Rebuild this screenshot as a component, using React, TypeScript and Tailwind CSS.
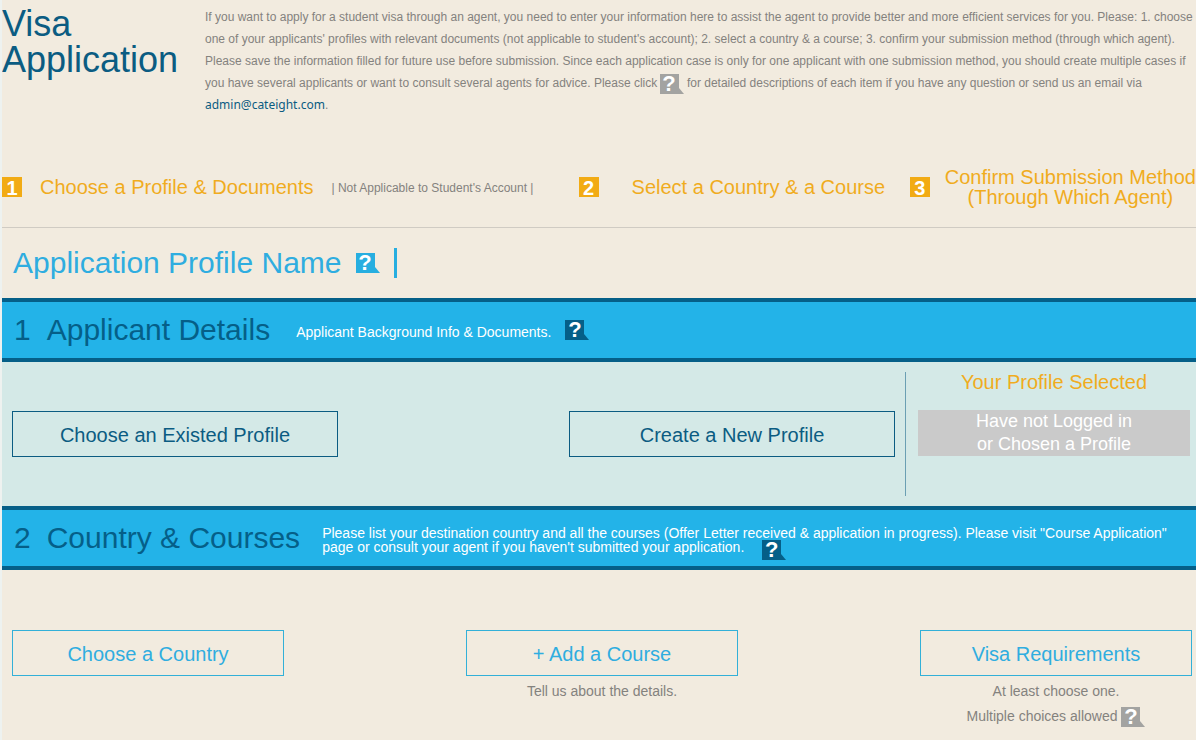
import type { ReactNode } from "react";

type HelpProps = { label: string; tone: "gray" | "sky" | "navy"; className?: string };

const tones = {
  gray: { box: "bg-[#a3a3a1]", tail: "text-[#a3a3a1]" },
  sky: { box: "bg-[#27aee0]", tail: "text-[#27aee0]" },
  navy: { box: "bg-[#055f88]", tail: "text-[#055f88]" },
};

function Help({ label, tone, className = "" }: HelpProps) {
  return (
    <button type="button" aria-label={label} className={`inline-flex h-5 shrink-0 items-end ${className}`}>
      <span
        className={`flex h-5 w-[19px] items-center justify-center text-[22px] leading-5 font-bold text-white ${tones[tone].box}`}
      >
        ?
      </span>
      <svg viewBox="0 0 5 6" className={`h-1.5 w-[5px] ${tones[tone].tail}`} aria-hidden="true">
        <path d="M0 0L5 6H0Z" fill="currentColor" />
      </svg>
    </button>
  );
}

function Badge({ children }: { children: ReactNode }) {
  return (
    <span className="flex h-5 w-5 shrink-0 items-center justify-center bg-[#f2ab14] pt-px text-xl leading-5 font-bold text-white">
      {children}
    </span>
  );
}

function Band({ number, title, children }: { number: number; title: string; children: ReactNode }) {
  return (
    <div className="flex h-16 items-center border-y-4 border-[#055f88] bg-[#23b3e8] pl-3">
      <h2 className="flex shrink-0 gap-4 text-3xl leading-9 text-[#055f88]">
        <span>{number}</span>
        <span>{title}</span>
      </h2>
      {children}
    </div>
  );
}

function OutlineButton({ children, className }: { children: ReactNode; className: string }) {
  return (
    <button type="button" className={`h-[46px] border pt-0.5 text-xl ${className}`}>
      {children}
    </button>
  );
}

export default function App() {
  return (
    <main className="min-h-screen overflow-x-hidden border-l-2 border-[#eef2f0] bg-[#f2ebdf] font-['Liberation_Sans',Arial,sans-serif] text-[#84827e]">
      <header className="flex pt-1.5">
        <h1 className="w-[203px] shrink-0 text-4xl leading-9 text-[#0b5c82]">
          Visa
          <br />
          Application
        </h1>
        <p className="text-xs leading-[22px]">
          If you want to apply for a student visa through an agent, you need to enter your information here to assist
          the agent to provide better and more efficient services for you. Please: 1. choose one of your applicants'
          profiles with relevant documents (not applicable to student's account); 2. select a country &amp; a course; 3.
          confirm your submission method (through which agent). Please save the information filled for future use
          before submission. Since each application case is only for one applicant with one submission method, you
          should create multiple cases if you have several applicants or want to consult several agents for advice.
          Please click <Help label="Help example" tone="gray" className="-my-1 -ml-px align-middle" /> for detailed
          descriptions of each item if you have any question or send us an email via{" "}
          <a
            href="mailto:admin@cateight.com"
            className="font-['Noto_Sans',sans-serif] text-xs leading-5 text-[#0b5c82]"
          >
            admin@cateight.com
          </a>
          .
        </p>
      </header>

      <ol className="mt-[31px] grid h-[81px] grid-cols-[578fr_332fr_284fr] items-center border-b border-[#d0cbc3] text-xl leading-5 whitespace-nowrap text-[#f0ac1e]">
        <li className="flex items-center gap-[18px]">
          <Badge>1</Badge>
          <span>Choose a Profile &amp; Documents</span>
          <span className="pt-0.5 text-xs leading-5 text-[#84827e]">| Not Applicable to Student's Account |</span>
        </li>
        <li className="flex items-center gap-[33px]">
          <Badge>2</Badge>
          <span>Select a Country &amp; a Course</span>
        </li>
        <li className="flex items-center gap-[15px]">
          <Badge>3</Badge>
          <span className="text-center">
            Confirm Submission Method
            <br />
            (Through Which Agent)
          </span>
        </li>
      </ol>

      <div className="flex h-[70px] items-center pl-[11px]">
        <label htmlFor="profile-name" className="text-3xl leading-9 text-[#2fade0]">
          Application Profile Name
        </label>
        <Help label="Help for application profile name" tone="sky" className="ml-3.5" />
        <input
          id="profile-name"
          type="text"
          className="ml-3.5 h-[30px] min-w-0 flex-1 border-l-[3px] border-[#27aee0] bg-transparent pl-2 text-2xl text-[#2fade0] outline-none"
        />
      </div>

      <section>
        <Band number={1} title="Applicant Details">
          <p className="ml-[26px] pt-1 text-sm text-white">Applicant Background Info &amp; Documents.</p>
          <Help label="Help for applicant details" tone="navy" className="ml-3.5" />
        </Band>
        <div className="flex h-36 bg-[#d4e9e7] py-2.5">
          <div className="flex flex-1 items-center justify-between px-2.5">
            <OutlineButton className="w-[326px] border-[#0b5c82] text-[#0b5c82]">Choose an Existed Profile</OutlineButton>
            <OutlineButton className="w-[326px] border-[#0b5c82] text-[#0b5c82]">Create a New Profile</OutlineButton>
          </div>
          <div className="w-[291px] border-l border-[#6b9fb3] pr-1.5 pl-3 text-center">
            <h3 className="text-xl leading-5 text-[#f0ac1e]">Your Profile Selected</h3>
            <p className="mt-[18px] bg-[#cacaca] text-lg leading-[23px] text-white">
              Have not Logged in
              <br />
              or Chosen a Profile
            </p>
          </div>
        </div>
      </section>

      <section>
        <Band number={2} title="Country & Courses">
          <div className="ml-[22px] pt-1 text-sm leading-3.5 text-white">
            <p>
              Please list your destination country and all the courses (Offer Letter received &amp; application in
              progress). Please visit "Course Application"
            </p>
            <div className="flex h-3.5 items-start gap-[18px]">
              <p>page or consult your agent if you haven't submitted your application.</p>
              <Help label="Help for country and courses" tone="navy" />
            </div>
          </div>
        </Band>
        <div className="flex items-start justify-between pt-[60px] pr-1 pl-2.5 text-center text-sm leading-[25px]">
          <OutlineButton className="w-[272px] border-[#33b0d8] text-[#2fade0]">Choose a Country</OutlineButton>
          <div className="w-[272px]">
            <OutlineButton className="w-full border-[#33b0d8] text-[#2fade0]">+ Add a Course</OutlineButton>
            <p className="pt-[3px]">Tell us about the details.</p>
          </div>
          <div className="w-[272px]">
            <OutlineButton className="w-full border-[#33b0d8] text-[#2fade0]">Visa Requirements</OutlineButton>
            <p className="pt-[3px]">At least choose one.</p>
            <p className="flex items-center justify-center gap-1">
              Multiple choices allowed
              <Help label="Help for visa requirements" tone="gray" />
            </p>
          </div>
        </div>
      </section>
    </main>
  );
}
